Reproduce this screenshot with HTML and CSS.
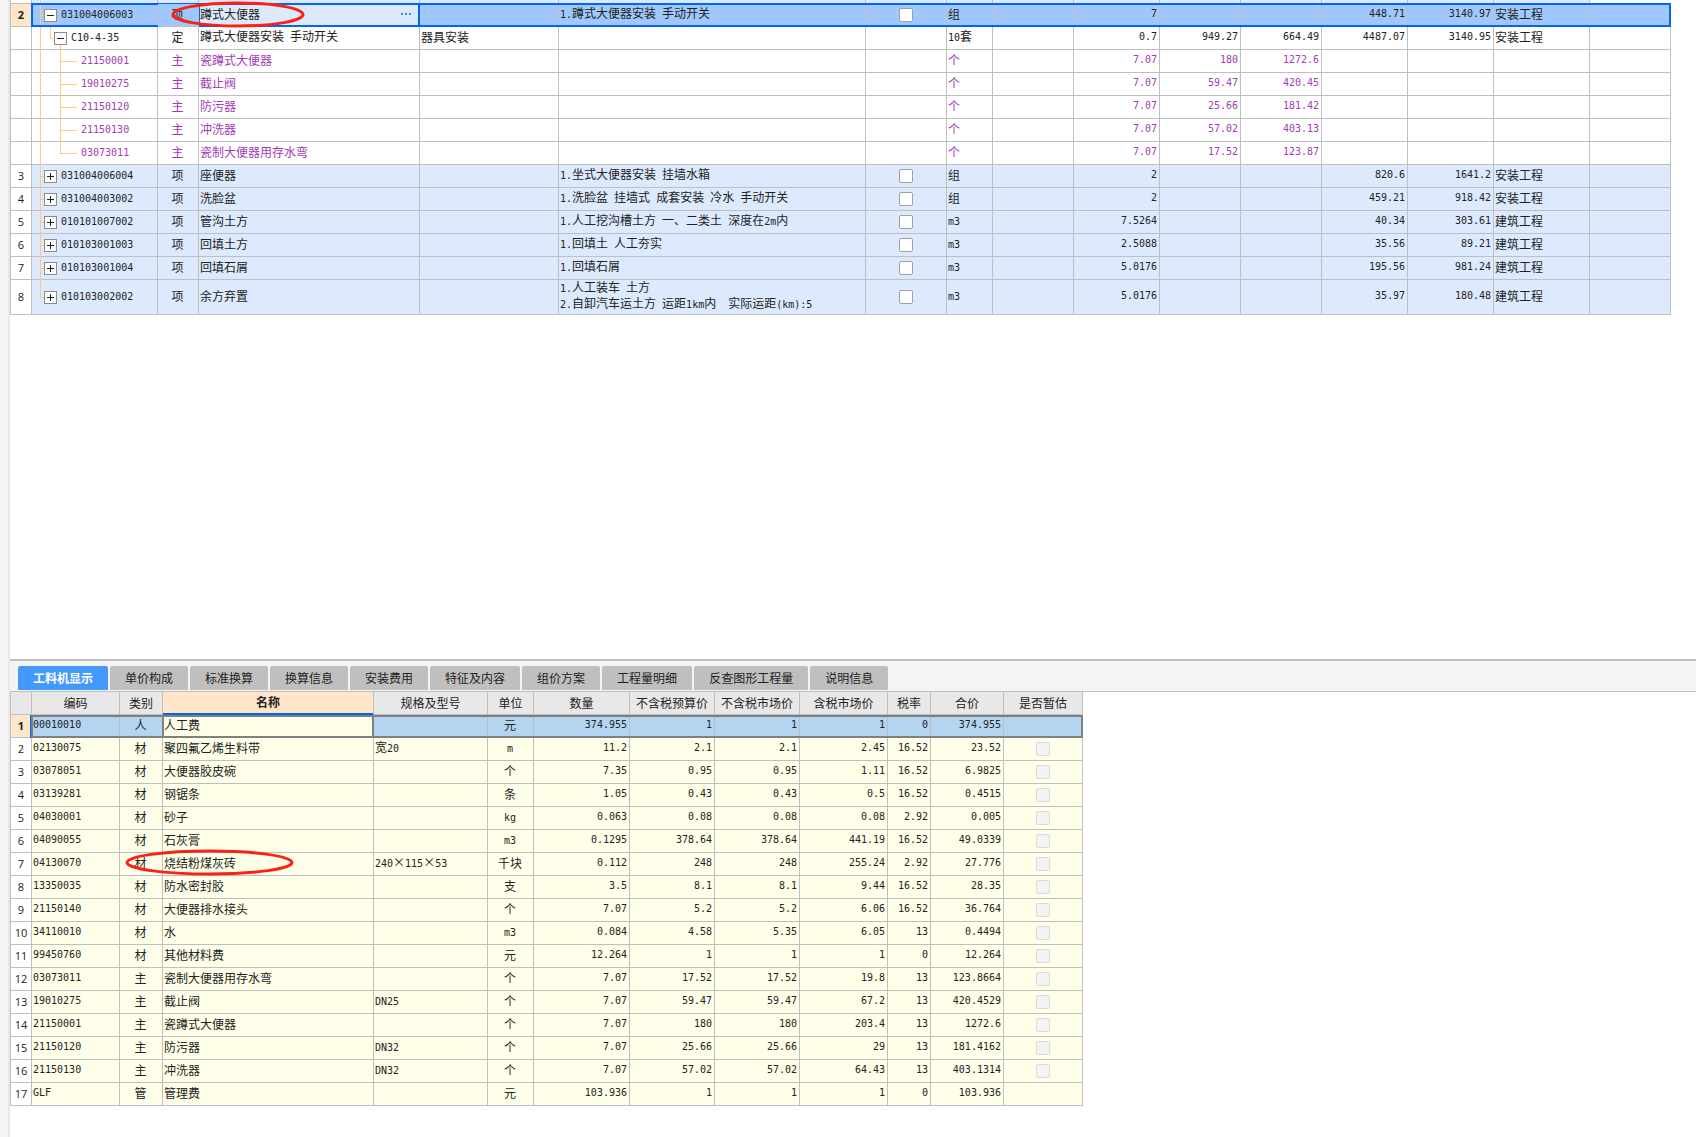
FILE: index.html
```html
<!DOCTYPE html>
<html lang="zh-CN">
<head>
<meta charset="utf-8">
<title>工程量清单</title>
<link rel="stylesheet" href="styles.css">
</head>
<body>
<div class="app">
<main class="work">
<section class="bill-pane">
<div class="grid-wrap">
<table class="grid bill">
<colgroup><col class="w21"><col class="w126"><col class="w41"><col class="w221"><col class="w139"><col class="w307"><col class="w81"><col class="w46"><col class="w81"><col class="w86"><col class="w81"><col class="w81"><col class="w86"><col class="w86"><col class="w96"><col class="w81"></colgroup>
<tbody>
<tr class="item cut"><th><td class="tree t1"><td><td><td><td><td><td><td><td><td><td><td><td><td>
<tr class="item current"><th>2<td class="tree t1 open"><button class="knob minus" aria-label="折叠"></button>031004006003<td class="marked">项<svg class="ring ring-a" width="134" height="27" viewBox="0 0 134 27"><ellipse cx="67" cy="13.5" rx="65" ry="11.5"/></svg><td class="editing"><div class="edit"><span>蹲式大便器</span><button class="more" aria-label="更多"><svg width="10" height="2" viewBox="0 0 10 2"><path d="M0 0h2v2H0zM4 0h2v2H4zM8 0h2v2H8z"/></svg></button></div><td><td><span class="n">1.</span>蹲式大便器安装<span class="n"> </span>手动开关<td><input type="checkbox" aria-label="选择"><td>组<td><td>7<td><td><td>448.71<td>3140.97<td>安装工程<td>
<tr><th><td class="tree t2"><button class="knob minus" aria-label="折叠"></button>C10-4-35<td>定<td>蹲式大便器安装<span class="n"> </span>手动开关<td>器具安装<td><td><td><span class="n">10</span>套<td><td>0.7<td>949.27<td>664.49<td>4487.07<td>3140.95<td>安装工程<td>
<tr class="mat"><th><td class="tree t3">21150001<td>主<td>瓷蹲式大便器<td><td><td><td>个<td><td>7.07<td>180<td>1272.6<td><td><td><td>
<tr class="mat"><th><td class="tree t3">19010275<td>主<td>截止阀<td><td><td><td>个<td><td>7.07<td>59.47<td>420.45<td><td><td><td>
<tr class="mat"><th><td class="tree t3">21150120<td>主<td>防污器<td><td><td><td>个<td><td>7.07<td>25.66<td>181.42<td><td><td><td>
<tr class="mat"><th><td class="tree t3">21150130<td>主<td>冲洗器<td><td><td><td>个<td><td>7.07<td>57.02<td>403.13<td><td><td><td>
<tr class="mat"><th><td class="tree t3 end">03073011<td>主<td>瓷制大便器用存水弯<td><td><td><td>个<td><td>7.07<td>17.52<td>123.87<td><td><td><td>
<tr class="item"><th>3<td class="tree t1"><button class="knob plus" aria-label="展开"></button>031004006004<td>项<td>座便器<td><td><span class="n">1.</span>坐式大便器安装<span class="n"> </span>挂墙水箱<td><input type="checkbox" aria-label="选择"><td>组<td><td>2<td><td><td>820.6<td>1641.2<td>安装工程<td>
<tr class="item"><th>4<td class="tree t1"><button class="knob plus" aria-label="展开"></button>031004003002<td>项<td>洗脸盆<td><td><span class="n">1.</span>洗脸盆<span class="n"> </span>挂墙式<span class="n"> </span>成套安装<span class="n"> </span>冷水<span class="n"> </span>手动开关<td><input type="checkbox" aria-label="选择"><td>组<td><td>2<td><td><td>459.21<td>918.42<td>安装工程<td>
<tr class="item"><th>5<td class="tree t1"><button class="knob plus" aria-label="展开"></button>010101007002<td>项<td>管沟土方<td><td><span class="n">1.</span>人工挖沟槽土方<span class="n"> </span>一、二类土<span class="n"> </span>深度在<span class="n">2m</span>内<td><input type="checkbox" aria-label="选择"><td><span class="n">m3</span><td><td>7.5264<td><td><td>40.34<td>303.61<td>建筑工程<td>
<tr class="item"><th>6<td class="tree t1"><button class="knob plus" aria-label="展开"></button>010103001003<td>项<td>回填土方<td><td><span class="n">1.</span>回填土<span class="n"> </span>人工夯实<td><input type="checkbox" aria-label="选择"><td><span class="n">m3</span><td><td>2.5088<td><td><td>35.56<td>89.21<td>建筑工程<td>
<tr class="item"><th>7<td class="tree t1"><button class="knob plus" aria-label="展开"></button>010103001004<td>项<td>回填石屑<td><td><span class="n">1.</span>回填石屑<td><input type="checkbox" aria-label="选择"><td><span class="n">m3</span><td><td>5.0176<td><td><td>195.56<td>981.24<td>建筑工程<td>
<tr class="item tall"><th>8<td class="tree t1 end"><button class="knob plus" aria-label="展开"></button>010103002002<td>项<td>余方弃置<td><td><span class="n">1.</span>人工装车<span class="n"> </span>土方<br><span class="n">2.</span>自卸汽车运土方<span class="n"> </span>运距<span class="n">1km</span>内<span class="n">  </span>实际运距<span class="n">(km):5</span><td><input type="checkbox" aria-label="选择"><td><span class="n">m3</span><td><td>5.0176<td><td><td>35.97<td>180.48<td>建筑工程<td>
</tbody>
</table>
<div class="select-frame bill-frame"></div>
</div>
</section>
<section class="detail-pane">
<div class="tabs" role="tablist">
<button class="tab active" role="tab" aria-selected="true">工料机显示</button>
<button class="tab" role="tab">单价构成</button>
<button class="tab" role="tab">标准换算</button>
<button class="tab" role="tab">换算信息</button>
<button class="tab" role="tab">安装费用</button>
<button class="tab" role="tab">特征及内容</button>
<button class="tab" role="tab">组价方案</button>
<button class="tab" role="tab">工程量明细</button>
<button class="tab" role="tab">反查图形工程量</button>
<button class="tab" role="tab">说明信息</button>
</div>
<div class="detail-body">
<div class="grid-wrap fit">
<table class="grid detail">
<colgroup><col class="w21"><col class="w88"><col class="w43"><col class="w211"><col class="w114"><col class="w46"><col class="w96"><col class="w85"><col class="w85"><col class="w88"><col class="w43"><col class="w73"><col class="w79"></colgroup>
<thead>
<tr><th><th>编码<th>类别<th class="sorted">名称<th>规格及型号<th>单位<th>数量<th>不含税预算价<th>不含税市场价<th>含税市场价<th>税率<th>合价<th>是否暂估
</thead>
<tbody>
<tr class="current"><th>1<td>00010010<td>人<td class="focus">人工费<td><td>元<td>374.955<td>1<td>1<td>1<td>0<td>374.955<td>
<tr><th>2<td>02130075<td>材<td>聚四氟乙烯生料带<td>宽<span class="n">20</span><td><span class="n">m</span><td>11.2<td>2.1<td>2.1<td>2.45<td>16.52<td>23.52<td><input type="checkbox" aria-label="是否暂估" disabled>
<tr><th>3<td>03078051<td>材<td>大便器胶皮碗<td><td>个<td>7.35<td>0.95<td>0.95<td>1.11<td>16.52<td>6.9825<td><input type="checkbox" aria-label="是否暂估" disabled>
<tr><th>4<td>03139281<td>材<td>钢锯条<td><td>条<td>1.05<td>0.43<td>0.43<td>0.5<td>16.52<td>0.4515<td><input type="checkbox" aria-label="是否暂估" disabled>
<tr><th>5<td>04030001<td>材<td>砂子<td><td><span class="n">kg</span><td>0.063<td>0.08<td>0.08<td>0.08<td>2.92<td>0.005<td><input type="checkbox" aria-label="是否暂估" disabled>
<tr><th>6<td>04090055<td>材<td>石灰膏<td><td><span class="n">m3</span><td>0.1295<td>378.64<td>378.64<td>441.19<td>16.52<td>49.0339<td><input type="checkbox" aria-label="是否暂估" disabled>
<tr><th>7<td>04130070<td class="marked">材<svg class="ring ring-b" width="169" height="27" viewBox="0 0 169 27"><ellipse cx="84.5" cy="13.5" rx="82.5" ry="11.5"/></svg><td>烧结粉煤灰砖<td><span class="n">240</span>×<span class="n">115</span>×<span class="n">53</span><td>千块<td>0.112<td>248<td>248<td>255.24<td>2.92<td>27.776<td><input type="checkbox" aria-label="是否暂估" disabled>
<tr><th>8<td>13350035<td>材<td>防水密封胶<td><td>支<td>3.5<td>8.1<td>8.1<td>9.44<td>16.52<td>28.35<td><input type="checkbox" aria-label="是否暂估" disabled>
<tr><th>9<td>21150140<td>材<td>大便器排水接头<td><td>个<td>7.07<td>5.2<td>5.2<td>6.06<td>16.52<td>36.764<td><input type="checkbox" aria-label="是否暂估" disabled>
<tr><th>10<td>34110010<td>材<td>水<td><td><span class="n">m3</span><td>0.084<td>4.58<td>5.35<td>6.05<td>13<td>0.4494<td><input type="checkbox" aria-label="是否暂估" disabled>
<tr><th>11<td>99450760<td>材<td>其他材料费<td><td>元<td>12.264<td>1<td>1<td>1<td>0<td>12.264<td><input type="checkbox" aria-label="是否暂估" disabled>
<tr><th>12<td>03073011<td>主<td>瓷制大便器用存水弯<td><td>个<td>7.07<td>17.52<td>17.52<td>19.8<td>13<td>123.8664<td><input type="checkbox" aria-label="是否暂估" disabled>
<tr><th>13<td>19010275<td>主<td>截止阀<td><span class="n">DN25</span><td>个<td>7.07<td>59.47<td>59.47<td>67.2<td>13<td>420.4529<td><input type="checkbox" aria-label="是否暂估" disabled>
<tr><th>14<td>21150001<td>主<td>瓷蹲式大便器<td><td>个<td>7.07<td>180<td>180<td>203.4<td>13<td>1272.6<td><input type="checkbox" aria-label="是否暂估" disabled>
<tr><th>15<td>21150120<td>主<td>防污器<td><span class="n">DN32</span><td>个<td>7.07<td>25.66<td>25.66<td>29<td>13<td>181.4162<td><input type="checkbox" aria-label="是否暂估" disabled>
<tr><th>16<td>21150130<td>主<td>冲洗器<td><span class="n">DN32</span><td>个<td>7.07<td>57.02<td>57.02<td>64.43<td>13<td>403.1314<td><input type="checkbox" aria-label="是否暂估" disabled>
<tr><th>17<td>GLF<td>管<td>管理费<td><td>元<td>103.936<td>1<td>1<td>1<td>0<td>103.936<td>
</tbody>
</table>
<div class="select-frame detail-frame"></div>
</div>
</div>
</section>
</main>
</div>
</body>
</html>
```

FILE: styles.css
```css
* { box-sizing: border-box; }

body {
  margin: 0;
  background: #fff;
  color: #222;
  font: 12px/14px "Noto Sans CJK SC", sans-serif;
}

button { font: inherit; color: inherit; border: 0; padding: 0; margin: 0; }

.app {
  display: flex;
  min-height: 100vh;
  border-left: 8px solid #f4f4f4;
}

.work {
  flex: 1;
  min-width: 0;
  display: flex;
  flex-direction: column;
  border-left: 2px solid #e9e9e9;
}

.bill-pane { flex: 1; padding-right: 25px; }

.grid-wrap { position: relative; }
.grid-wrap.fit { width: max-content; }

/* shared grid */
.grid {
  table-layout: fixed;
  border-collapse: separate;
  border-spacing: 0;
  border-left: 1px solid #bfbfbf;
}
.bill { width: 100%; }
.detail { width: 1073px; }

.grid th,
.grid td {
  height: 23px;
  padding: 0 2px 2px 1px;
  border-right: 1px solid #bfbfbf;
  border-bottom: 1px solid #bfbfbf;
  white-space: nowrap;
  text-align: left;
  vertical-align: middle;
}
.grid tbody th {
  padding: 0;
  background: #fff;
  text-align: center;
  font: 11px/14px "Open Sans", sans-serif;
}
.grid tbody .current th { background: #ffe6c9; font-weight: 700; }
.grid td:nth-child(3) { text-align: center; }

.w21 { width: 21px; }
.w41 { width: 41px; }
.w43 { width: 43px; }
.w46 { width: 46px; }
.w73 { width: 73px; }
.w79 { width: 79px; }
.w81 { width: 81px; }
.w85 { width: 85px; }
.w86 { width: 86px; }
.w88 { width: 88px; }
.w96 { width: 96px; }
.w114 { width: 114px; }
.w126 { width: 126px; }
.w139 { width: 139px; }
.w211 { width: 211px; }
.w221 { width: 221px; }
.w307 { width: 307px; }

/* codes and figures */
.n,
.grid td:nth-child(2),
.bill td:nth-child(n+10):nth-child(-n+14),
.detail td:nth-child(n+7):nth-child(-n+12) {
  font-family: "DejaVu Sans Mono", monospace;
  font-size: 10px;
}
.n { white-space: pre; }
.bill td:nth-child(n+10):nth-child(-n+14),
.detail td:nth-child(n+7):nth-child(-n+12) { text-align: right; }
.detail td:nth-child(6) { text-align: center; }
.bill td:nth-child(7),
.detail td:nth-child(13) { padding: 0; }

input[type="checkbox"] {
  appearance: none;
  display: block;
  width: 14px;
  height: 14px;
  margin: 0 auto;
  border: 1px solid #a0a0a0;
  border-radius: 2px;
  background: #fff;
}
input[type="checkbox"]:disabled { border-color: #dadada; background: #f3f3f3; }

/* bill table */
.bill .item td { background-color: #ddeafe; }
.bill .current td { background-color: #a0c8fe; }
.bill .cut th,
.bill .cut td { height: 4px; line-height: 0; }
.bill .tall td { height: 33px; }
.bill .mat td { color: #a33bb5; }
.bill .current td.editing {
  background-color: #ddeafe;
  border-right-color: #0066fa;
  box-shadow: -1px 0 #0066fa, inset 1px 0 #0066fa, inset -1px 0 #0066fa;
}
.edit { display: flex; align-items: center; justify-content: space-between; }
.more { display: flex; align-items: center; height: 14px; margin-right: 6px; background: none; }
.more path { fill: #3b8ede; }

/* tree guides */
.grid .tree { position: relative; padding-bottom: 0; }
.tree::before {
  content: "";
  position: absolute;
  inset: 0 0 -1px 0;
  background-repeat: no-repeat;
  --line: linear-gradient(#ffc97f, #ffc97f);
}
.grid .t1 { padding-left: 12px; }
.t1::before {
  background-image: var(--line), var(--line);
  background-position: 8px 0, 8px 50%;
  background-size: 1px 100%, 4px 1px;
}
.cut .t1::before { background-size: 1px 100%, 0 0; }
.t1.end::before { background-size: 1px 50%, 4px 1px; }
.t1.open::before {
  background-image: var(--line), var(--line), var(--line);
  background-position: 8px 0, 8px 50%, 18px 100%;
  background-size: 1px 100%, 4px 1px, 1px 40%;
}
.grid .t2 { padding-left: 22px; }
.t2::before {
  background-image: var(--line), var(--line), var(--line), var(--line);
  background-position: 8px 0, 18px 0, 18px 50%, 28px 100%;
  background-size: 1px 100%, 1px 50%, 4px 1px, 1px 40%;
}
.grid .t3 { padding-left: 49px; }
.t3::before {
  background-image: var(--line), var(--line), var(--line);
  background-position: 8px 0, 28px 0, 28px 50%;
  background-size: 1px 100%, 1px 100%, 17px 1px;
}
.t3.end::before { background-size: 1px 100%, 1px 50%, 17px 1px; }

.knob {
  position: relative;
  display: inline-block;
  width: 13px;
  height: 13px;
  margin-right: 4px;
  border: 1px solid #8c8c8c;
  vertical-align: middle;
  background: #fff linear-gradient(#222, #222) center / 7px 1px no-repeat;
}
.knob.plus {
  background: linear-gradient(#222, #222) center / 7px 1px no-repeat,
    linear-gradient(#222, #222) center / 1px 7px no-repeat, #fff;
}

/* frames over the selected row */
.select-frame { position: absolute; left: 21px; right: 0; pointer-events: none; }
.bill-frame { top: 3px; height: 24px; border: 2px solid #0066fa; }
.detail-frame { top: 23px; height: 23px; border: 2px solid #808080; box-shadow: -1px 0 #0066fa; }

/* red markers */
.marked { position: relative; z-index: 1; }
.ring { position: absolute; overflow: visible; pointer-events: none; }
.ring ellipse { fill: none; stroke: #fb2114; stroke-width: 3; }
.ring-a { left: 13px; top: -3px; }
.ring-b { left: 5px; top: -4px; }

/* lower pane */
.detail-pane { border-top: 2px solid #bfbfbf; padding-bottom: 31px; }
.tabs { display: flex; gap: 2px; padding: 5px 8px 1px; background: #f4f4f4; }
.tab {
  height: 24px;
  padding: 0 15px;
  border-radius: 2px 2px 0 0;
  background: #bfbfbf;
  white-space: nowrap;
}
.tab.active { background: #4499ff; color: #fff; font-weight: 700; }
.detail-body { border-top: 1px solid #bfbfbf; }
.detail thead th { padding: 0; background: #e8e8e8; text-align: center; font-weight: 400; }
.detail thead th.sorted {
  padding-bottom: 2px;
  background: #ffe6c9;
  border-bottom: 1px solid #0066fa;
  box-shadow: inset 0 -1px #0066fa;
  font-weight: 700;
}
.detail td { background: #ffffe9; }
.detail .current td { background: #b3d5f2; }
.detail .current td.focus {
  background: #ffffe9;
  border-right-color: #808080;
  box-shadow: -1px 0 #808080, inset 1px 0 #808080, inset -1px 0 #808080;
}
```
